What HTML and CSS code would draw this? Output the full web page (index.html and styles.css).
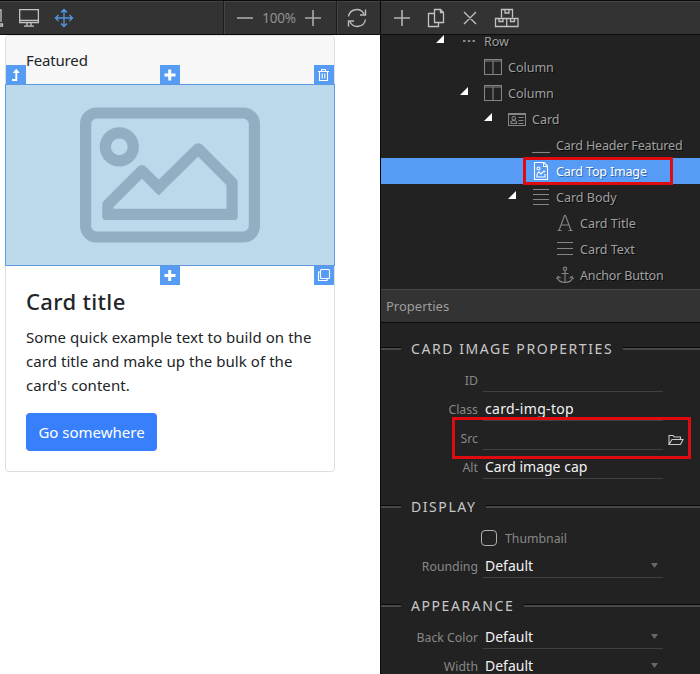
FILE: index.html
```html
<!DOCTYPE html>
<html lang="en">
<head>
<meta charset="utf-8">
<title>Card editor</title>
<link rel="stylesheet" href="styles.css">
</head>
<body>
<div class="app">
  <main class="canvas">
    <div class="toolbar">
      <div class="tools devices">
        <svg width="84" height="32" viewBox="0 0 84 32" fill="none" stroke="#c4c4c4" stroke-width="1.3">
          <path d="M0 8H1V20M0 22H2.5V24H0M19.7 7.6H38.4V20.6H19.7ZM20 18.5H38M27 21V24M31 21V24M24 24.2H34"/>
          <path stroke="#5596e6" d="M64 7.5V24.5M55.5 16H72.5M61 10.5L64 7.5L67 10.5M61 21.5L64 24.5L67 21.5M58.500 13L55.500 16L58.500 19M69.500 13L72.500 16L69.500 19"/>
        </svg>
      </div>
      <div class="tools zoom">
        <svg width="16" height="18" viewBox="0 0 16 18" stroke="#aaa" stroke-width="1.6"><path d="M0 9H16"/></svg>
        <span class="zoom-value">100%</span>
        <svg width="16" height="18" viewBox="0 0 16 18" stroke="#aaa" stroke-width="1.6"><path d="M0 9H16M8 1V17"/></svg>
      </div>
      <div class="tools refresh">
        <svg width="20" height="20" viewBox="0 0 20 20" fill="none" stroke="#bdbdbd" stroke-width="1.4"><path d="M1.500 8.500A8.300 8.300 0 0 1 17 6M18.500 1.500V7H13M18.500 11.500A8.300 8.300 0 0 1 3 14M1.500 18.500V13H7"/></svg>
      </div>
    </div>
    <div class="card">
      <div class="card-header">Featured</div>
      <div class="card-image">
        <svg width="328" height="180" viewBox="6 85 328 180" fill="none" stroke="#91afc2" stroke-width="11.200">
          <rect x="85.600" y="113" width="168.800" height="124" rx="11"/>
          <circle cx="119.300" cy="146.800" r="14"/>
          <path stroke-linejoin="round" d="M107.900 214.400V204.700L141.900 170.700L158.700 187.500L198.200 148.800L232.100 182.700V214.400Z"/>
          <path fill="#91afc2" stroke="none" d="M158.700 195.400L153 189.700L158.700 184L164.400 189.700ZM102.300 214H108V220H104.500Q102.300 219.500 102.300 217ZM237.700 214H232V220H235.500Q237.700 219.500 237.700 217Z"/>
        </svg>
        <span class="handle top left"><svg width="20" height="20" viewBox="0 0 20 20" fill="none" stroke="#fff" stroke-width="1.900"><path d="M6 15H10.300V6"/><path fill="#fff" stroke="none" d="M6.800 8L10.300 3.800L13.800 8Z"/></svg></span>
        <span class="handle top center"><svg width="20" height="20" viewBox="0 0 20 20" stroke="#fff" stroke-width="3"><path d="M4.500 10H15.500M9.700 4.500V15.500"/></svg></span>
        <span class="handle top right"><svg width="20" height="20" viewBox="0 0 20 20" fill="none" stroke="#fff" stroke-width="1.100"><path d="M4 6.500H15M7.500 6V4.500H11.500V6M5.500 6.500V15.500H13.500V6.500M8.200 8.500V13.500M10.800 8.500V13.500"/></svg></span>
        <span class="handle bottom center"><svg width="20" height="20" viewBox="0 0 20 20" stroke="#fff" stroke-width="3"><path d="M4.500 9.500H15.500M9.700 4V15"/></svg></span>
        <span class="handle bottom right"><svg width="20" height="20" viewBox="0 0 20 20" fill="none" stroke="#fff" stroke-width="1.100"><rect x="6.500" y="3.500" width="9" height="9" rx="1"/><path d="M6.500 6H4.500V14.500H13V12.500"/></svg></span>
      </div>
      <div class="card-body">
        <h5 class="card-title">Card title</h5>
        <p class="card-text">Some quick example text to build on the<br>card title and make up the bulk of the<br>card's content.</p>
        <a class="button"><span>Go somewhere</span></a>
      </div>
    </div>
  </main>
  <aside class="panel">
    <div class="toolbar">
      <svg width="150" height="32" viewBox="381 2 150 32" fill="none" stroke="#c2c2c2" stroke-width="1.300">
        <path stroke-width="1.600" stroke="#b4b4b4" d="M394 18H410M402 10V26"/>
        <path d="M434.500 9.500H440.500L443.500 12.500V22.500H434.500ZM440.500 9.500V12.500H443.500M434 13.500H428.500V26.500H438.500V23M464 12L476 24M476 12L464 24"/>
        <path d="M501.500 17.500V9.500H512.500V17.500M505 9.500V13H509V9.500M495.500 18.500H518V26.500H495.500ZM506.700 18.500V26.500M499 18.500V21.500H503V18.500M510.500 18.500V21.500H514.500V18.500"/>
      </svg>
    </div>
    <div class="tree">
      <div class="node d0"><i class="arrow"></i><svg class="icon" viewBox="0 0 18 18"><path stroke-width="2" d="M3 9H5.500M7.800 9H10.300M12.500 9H15"/></svg><span>Row</span></div>
      <div class="node d2"><svg class="icon" viewBox="0 0 18 18"><path d="M.5 1.500H17.500V16.500H.5ZM.5 3H17.500M9 3V16"/></svg><span>Column</span></div>
      <div class="node d1"><i class="arrow"></i><svg class="icon" viewBox="0 0 18 18"><path d="M.5 1.500H17.500V16.500H.5ZM.5 3H17.500M9 3V16"/></svg><span>Column</span></div>
      <div class="node d3"><i class="arrow"></i><svg class="icon" viewBox="0 0 18 18"><path d="M.5 3.500H17.500V15.500H.5ZM.5 4.500H17.500M3 13.500V11.500L5 10.500H6.500L8.500 11.500V13.500ZM10.500 7.500H15.500M10.500 10.500H15.500M10.500 13.500H15.500"/><circle cx="5.750" cy="8.300" r="1.800"/></svg><span>Card</span></div>
      <div class="node d4"><svg class="icon" viewBox="0 0 18 18"><path d="M0 16.500H18"/></svg><span class="long">Card Header Featured</span></div>
      <div class="node d4 selected"><svg class="icon" viewBox="0 0 18 18"><path d="M2.500 .5H12L15.500 4V17.500H2.500ZM11.500 1V4.500H15M5 11.500L7 10L9 12L12 9L13 10M5 12V15H13V12"/><circle cx="6.500" cy="6.500" r="1.500"/></svg><span class="long">Card Top Image</span><b class="mark"></b></div>
      <div class="node d5"><i class="arrow"></i><svg class="icon" viewBox="0 0 18 18"><path d="M1 1.500H17M1 6.500H17M1 11.500H17M1 16.500H17"/></svg><span>Card Body</span></div>
      <div class="node d6"><svg class="icon" viewBox="0 0 18 18"><path d="M3 16.500L8.500 1.500H9.500L15 16.500M5.300 11H12.700M1.500 16.500H5.500M12.500 16.500H16.500"/></svg><span>Card Title</span></div>
      <div class="node d6"><svg class="icon" viewBox="0 0 18 18"><path d="M1 2.500H17M1 8.500H17M1 14.500H17"/></svg><span>Card Text</span></div>
      <div class="node d6"><svg class="icon" viewBox="0 0 18 18"><circle cx="9" cy="2.800" r="1.700"/><path d="M9 4.500V16M5.500 7.500H12.500M1.500 12Q3 16.500 9 16.500Q15 16.500 16.500 12M.5 13L2 10.500L4.500 12M13.500 12L16 10.500L17.500 13"/></svg><span class="long">Anchor Button</span></div>
    </div>
    <div class="panel-header"><span>Properties</span></div>
    <div class="properties">
      <h2><span>CARD IMAGE PROPERTIES</span></h2>
      <div class="row"><label>ID</label><div class="field"></div></div>
      <div class="row"><label>Class</label><div class="field spaced"><span>card-img-top</span></div></div>
      <div class="row"><label>Src</label><div class="field"></div>
        <svg class="folder" viewBox="0 0 16 12" fill="none" stroke="#c8c8c8" stroke-width="1.100"><path d="M1 10.500V1.500H5L6.500 3H12.500V5M1 10.500L4 5.500H15L12.500 10.500Z"/></svg>
        <b class="mark"></b>
      </div>
      <div class="row"><label>Alt</label><div class="field"><span>Card image cap</span></div></div>
      <h2 class="display"><span>DISPLAY</span></h2>
      <div class="check"><i class="box"></i><span>Thumbnail</span></div>
      <div class="row"><label>Rounding</label><div class="field select"><span>Default</span></div></div>
      <h2 class="appearance"><span>APPEARANCE</span></h2>
      <div class="row"><label>Back Color</label><div class="field select"><span>Default</span></div></div>
      <div class="row"><label>Width</label><div class="field select"><span>Default</span></div></div>
    </div>
  </aside>
</div>
</body>
</html>
```
FILE: styles.css
```css
* { box-sizing: border-box; }
body { margin: 0; background: #fff; font-family: "Noto Sans", "Open Sans", sans-serif; }
svg { display: block; flex: none; }
.app { display: grid; grid-template-columns: 380px 320px; height: 674px; overflow: hidden; }
.canvas { background: #fff; }
.toolbar { height: 35px; display: flex; background: #333; border-top: 1px solid #0c0c0c; border-bottom: 1px solid #0c0c0c; box-shadow: inset 0 1px #444; align-items: center; }
.tools { display: flex; align-items: center; height: 33px; }
.devices { width: 223px; }
.zoom { width: 113px; border-left: 1px solid #1d1d1d; box-shadow: inset 1px 0 #444, inset 0 1px #444; padding-left: 13px; }
.zoom-value { width: 52px; text-align: center; color: #919191; font-size: 13.500px; letter-spacing: -.2px; }
.refresh { width: 44px; border-left: 1px solid #1d1d1d; box-shadow: inset 1px 0 #444, inset 0 1px #444; padding-left: 10px; }

.card { width: 330px; height: 437px; margin: 0 0 0 5px; border: 1px solid #dfdfdf; border-radius: 4px; color: #212529; }
.card-header { height: 48px; background: #f7f7f7; padding: 12px 20px 0; font-size: 15px; line-height: 24px; letter-spacing: -.15px; border-radius: 3px 3px 0 0; }
.card-image { position: relative; margin: 0 -1px; height: 182px; border: 1px solid #5e9add; background: #bbd9eb; }
.handle { position: absolute; width: 20px; height: 19px; background: #569cf4; overflow: hidden; }
.top { top: -20px; }
.bottom { bottom: -20px; }
.left { left: 0; }
.center { left: 154px; }
.right { right: 0; }
.card-body { padding: 21px 20px 0; }
.card-title { margin: 0 0 9px; font-size: 22px; line-height: 29px; font-weight: 500; letter-spacing: .35px; }
.card-text { margin: 0 0 16px; font-size: 15px; line-height: 24px; letter-spacing: .06px; white-space: nowrap; }
.button { display: flex; width: 131px; height: 38px; background: #3880fb; color: #fff; border-radius: 4px; font-size: 15px; align-items: center; justify-content: center; }

.panel { background: #222; border-left: 1px solid #090909; overflow: hidden; }
.tree { height: 254px; overflow: hidden; }
.node { position: relative; display: flex; align-items: center; height: 26px; color: #a0a0a0; font-size: 12.500px; line-height: 12px; text-shadow: 1px 1px #0b0b0b; white-space: nowrap; }
.node span { padding-top: 2px; }
.node:first-child { margin-top: -7px; }
.long { letter-spacing: -.16px; }
.icon { width: 18px; height: 18px; fill: none; stroke: #858585; stroke-width: 1.100; margin-right: 6px; }
.arrow { width: 8px; height: 8px; margin: -4px 16px 0 0; background: #fff; clip-path: polygon(100% 0, 100% 100%, 0 100%); }
.d0 { padding-left: 55px; }
.d1 { padding-left: 79px; }
.d2 { padding-left: 103px; }
.d3 { padding-left: 103px; }
.d4 { padding-left: 151px; }
.d5 { padding-left: 127px; }
.d6 { padding-left: 175px; }
.selected { background: #569cf6; color: #fff; text-shadow: 1px 1px #3465a5; }
.selected .icon { stroke: #fff; }
.mark { position: absolute; border: 3px solid #de0b10; }
.node .mark { left: 142px; top: -1px; width: 150px; height: 28px; }
.panel-header { height: 34px; background: #333; border-top: 1px solid #494949; border-bottom: 1px solid #0d0d0d; padding-left: 5px; color: #9d9d9d; font-size: 13px; line-height: 33px; }
.properties { padding-top: 15px; }
h2 { display: flex; gap: 10px; align-items: center; height: 22px; margin: 0 0 3px; font-size: 14px; line-height: 20px; font-weight: 400; color: #c8c8c8; letter-spacing: 1.570px; white-space: nowrap; }
h2::before, h2::after { content: ""; height: 2px; background: #484848; border-top: 1px solid #080808; margin-top: -2px; }
h2::before { width: 20px; }
h2::after { flex: 1; }
.display { margin-top: 17px; margin-bottom: 6px; }
.appearance { margin-top: 17px; }
.row { position: relative; display: flex; height: 29px; }
.row label { width: 97px; margin-right: 5px; text-align: right; color: #888; font-size: 12.300px; line-height: 35px; white-space: nowrap; }
.field { width: 180px; height: 29px; border-bottom: 1px solid #404040; padding-left: 2px; color: #f2f2f2; font-size: 14px; line-height: 34px; white-space: nowrap; }
.spaced { letter-spacing: .32px; }
.select { display: flex; justify-content: space-between; }
.select::after { content: ""; width: 7px; height: 5px; margin: 14px 5px 0 0; background: #686868; clip-path: polygon(0 0, 100% 0, 50% 100%); }
.folder { width: 16px; height: 12px; margin: 13px 0 0 5px; }
.row .mark { left: 71px; top: -4px; width: 239px; height: 42px; }
.check { display: flex; align-items: center; height: 25px; padding: 3px 0 0 100px; color: #888; font-size: 12.300px; }
.box { width: 16px; height: 16px; border: 1px solid #b0b0b0; border-radius: 4px; margin-right: 8px; }
```
